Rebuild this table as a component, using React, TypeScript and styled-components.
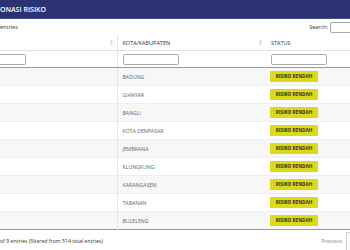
import * as React from 'react';
import styled, { createGlobalStyle } from 'styled-components';

const GlobalStyle = createGlobalStyle`
    html, body {
        margin: 0;
        padding: 0;
        background: #ffffff;
        overflow: hidden;
    }
    body {
        font-family: "Open Sans", "Liberation Sans", sans-serif;
        color: #333;
    }
`;

const Page = styled.div`
    width: 350px;
    height: 250px;
    overflow: hidden;
`;

const TitleBar = styled.div`
    height: 18px;
    line-height: 19px;
    background: #2c3171;
    border-bottom: 1px solid #474c8c;
    color: #fff;
    font-size: 7px;
    font-weight: 600;
    white-space: nowrap;
`;

const Controls = styled.div`
    width: 360px;
    height: 16px;
    display: flex;
    align-items: center;
    justify-content: space-between;
    font-size: 5.5px;
    color: #333;
`;

const SearchBox = styled.label`
    display: flex;
    align-items: center;
    gap: 2px;
`;

const TextInput = styled.input<{ $w: number; $cut?: boolean }>`
    box-sizing: border-box;
    width: ${p => p.$w}px;
    height: 11px;
    margin: 0;
    padding: 0 2px;
    border: 1px solid #aaa;
    border-left: ${p => (p.$cut ? 'none' : '1px solid #aaa')};
    border-radius: ${p => (p.$cut ? '0 2px 2px 0' : '2px')};
    background: #fff;
    font-size: 5px;
    display: block;
`;

const Table = styled.table`
    width: 360px;
    table-layout: fixed;
    border-collapse: collapse;
    border-bottom: 1px solid #999;
`;

const HeadCell = styled.th<{ $first?: boolean }>`
    height: 15px;
    padding: 0 4px 0 5px;
    font-size: 5.5px;
    font-weight: 400;
    color: #333;
    text-align: left;
    border-bottom: 1px solid #e2e2e2;
    border-right: ${p => (p.$first ? '1px solid #e6e6e6' : 'none')};
`;

const HeadInner = styled.div`
    display: flex;
    align-items: center;
    justify-content: space-between;
`;

const FilterCell = styled.th<{ $first?: boolean }>`
    height: 16px;
    padding: 0 5px;
    font-weight: 400;
    text-align: left;
    border-bottom: 1px solid #9a9a9a;
    border-right: ${p => (p.$first ? '1px solid #e6e6e6' : 'none')};
`;

const FirstFilter = styled(FilterCell)`
    padding-left: 0;
`;

const Row = styled.tr<{ $odd: boolean }>`
    background: ${p => (p.$odd ? '#f7f7f7' : '#ffffff')};
`;

const Cell = styled.td<{ $first?: boolean }>`
    height: 17px;
    padding: 0 5px;
    font-size: 5.2px;
    color: #666;
    border-top: 1px solid #eeeeee;
    border-right: ${p => (p.$first ? '1px solid #e6e6e6' : 'none')};
    white-space: nowrap;
    vertical-align: middle;
`;

const Badge = styled.span`
    display: inline-block;
    width: 48px;
    height: 11px;
    line-height: 11px;
    margin-left: -1px;
    background: #dcd919;
    color: #2a2a2a;
    font-size: 4.7px;
    font-weight: 700;
    text-align: center;
    border-radius: 1px;
`;

const Footer = styled.div`
    width: 360px;
    height: 21px;
    display: flex;
    align-items: center;
    justify-content: space-between;
    font-size: 5.2px;
    color: #333;
`;

const Pager = styled.div`
    display: flex;
    align-items: center;
    gap: 4px;
    color: #888;
`;

const PageButton = styled.div`
    width: 13px;
    height: 18px;
    margin-top: 3px;
    border: 1px solid #cfcfcf;
    border-right: none;
    border-radius: 2px 0 0 2px;
`;

const SortIcon: React.FC = () => (
    <svg width="3" height="5" viewBox="0 0 3 5">
        <path d="M1.5 0 L3 2 L0 2 Z" fill="#c8c8c8" />
        <path d="M1.5 5 L3 3 L0 3 Z" fill="#c8c8c8" />
    </svg>
);

const regencies = [
    'BADUNG',
    'GIANYAR',
    'BANGLI',
    'KOTA DENPASAR',
    'JEMBRANA',
    'KLUNGKUNG',
    'KARANGASEM',
    'TABANAN',
    'BULELENG',
];

export default function App() {
    return (
        <Page>
            <GlobalStyle />
            <TitleBar>ONASI RISIKO</TitleBar>
            <Controls>
                <span>entries</span>
                <SearchBox>
                    Search:
                    <TextInput $w={30} />
                </SearchBox>
            </Controls>
            <Table>
                <colgroup>
                    <col style={{ width: 117 }} />
                    <col style={{ width: 149 }} />
                    <col style={{ width: 94 }} />
                </colgroup>
                <thead>
                    <tr>
                        <HeadCell $first>
                            <HeadInner>
                                <span />
                                <SortIcon />
                            </HeadInner>
                        </HeadCell>
                        <HeadCell>
                            <HeadInner>
                                <span>KOTA/KABUPATEN</span>
                                <SortIcon />
                            </HeadInner>
                        </HeadCell>
                        <HeadCell>
                            <HeadInner>
                                <span>STATUS</span>
                            </HeadInner>
                        </HeadCell>
                    </tr>
                    <tr>
                        <FirstFilter $first>
                            <TextInput $w={26} $cut />
                        </FirstFilter>
                        <FilterCell>
                            <TextInput $w={56} />
                        </FilterCell>
                        <FilterCell>
                            <TextInput $w={56} />
                        </FilterCell>
                    </tr>
                </thead>
                <tbody>
                    {regencies.map((name, i) => (
                        <Row key={name} $odd={i % 2 === 0}>
                            <Cell $first />
                            <Cell>{name}</Cell>
                            <Cell>
                                <Badge>RISIKO RENDAH</Badge>
                            </Cell>
                        </Row>
                    ))}
                </tbody>
            </Table>
            <Footer>
                <span>of 9 entries (filtered from 514 total entries)</span>
                <Pager>
                    <span>Previous</span>
                    <PageButton />
                </Pager>
            </Footer>
        </Page>
    );
}
